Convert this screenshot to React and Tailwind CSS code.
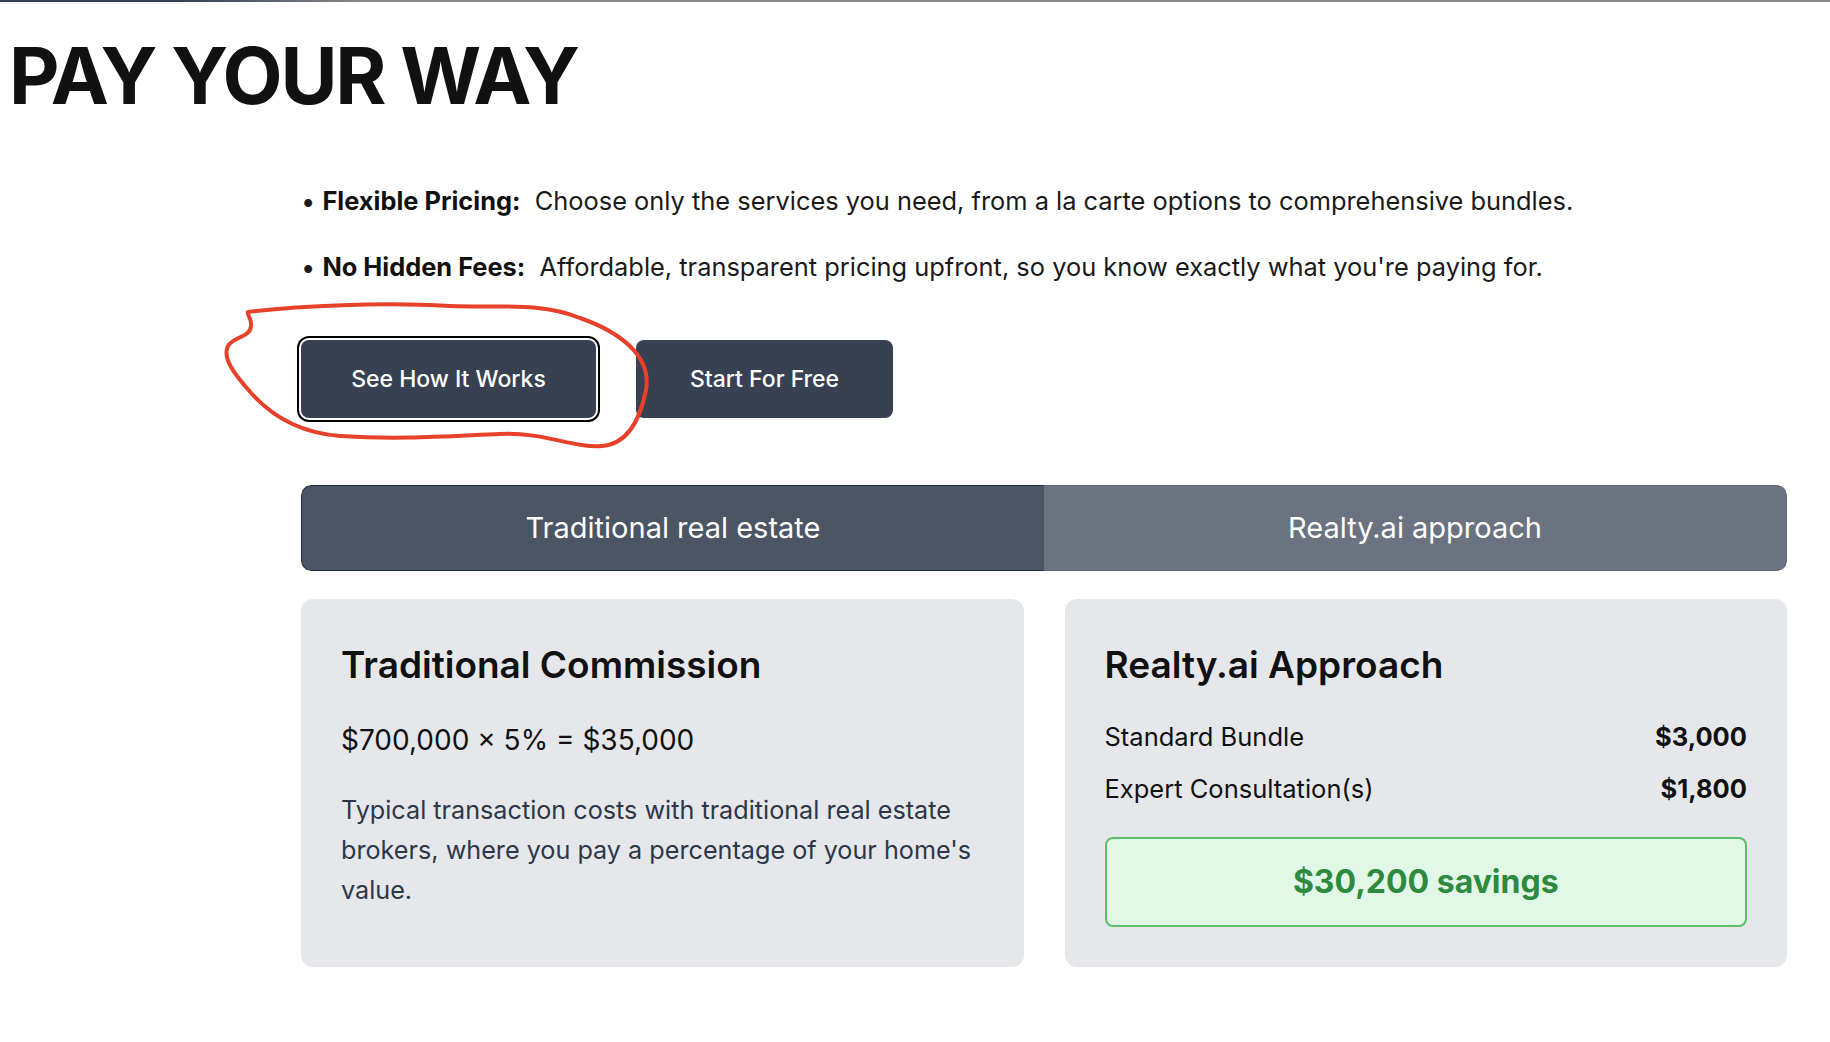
export default function App() {
  return (
    <div className="relative min-h-screen bg-white font-['Inter',sans-serif] text-[#111]">
      {/* top accent line */}
      <div className="h-[2px] w-full bg-gradient-to-r from-[#364155] from-10% to-[#8a8a8a] to-20%" />

      <h1 className="mt-[34px] pl-[9px] text-[78px] font-bold leading-[80px] tracking-[-0.03em] text-[#111]">
        PAY YOUR WAY
      </h1>

      <div className="ml-[301px] mr-[43px]">
        {/* bullets */}
        <div className="mt-[69px] flex flex-col gap-[34px] text-[25.4px] leading-[32px] text-[#1a1a1a]">
          <p>
            • <span className="font-bold text-[#111]">Flexible Pricing:</span>&nbsp; Choose only the services you need, from a la carte options to comprehensive bundles.
          </p>
          <p>
            • <span className="font-bold text-[#111]">No Hidden Fees:</span>&nbsp; Affordable, transparent pricing upfront, so you know exactly what you're paying for.
          </p>
        </div>

        {/* buttons */}
        <div className="mt-[57px] flex gap-[40px]">
          <button className="h-[78px] w-[295px] rounded-[8px] bg-[#374151] text-[23px] font-medium text-white ring-2 ring-black ring-offset-2 ring-offset-white">
            See How It Works
          </button>
          <button className="h-[78px] w-[257px] rounded-[8px] bg-[#374151] text-[23px] font-medium text-white">
            Start For Free
          </button>
        </div>

        {/* tabs */}
        <div className="mt-[67px] flex h-[86px] overflow-hidden rounded-[10px] text-[29px] text-white">
          <div className="flex flex-1 items-center justify-center rounded-l-[10px] border border-r-0 border-[#1f2d44] bg-[#4b5563]">
            Traditional real estate
          </div>
          <div className="flex flex-1 items-center justify-center rounded-r-[10px] border border-l-0 border-[#5f6675] bg-[#6b7280]">
            Realty.ai approach
          </div>
        </div>

        {/* cards */}
        <div className="mt-[28px] grid grid-cols-2 gap-[41px]">
          <div className="rounded-[12px] bg-[#e5e7eb] px-10 pb-10 pt-11">
            <h2 className="text-[37px] font-semibold leading-[44px] text-[#111]">Traditional Commission</h2>
            <p className="mt-[35px] text-[28px] leading-[36px] text-[#111]">$700,000 × 5% = $35,000</p>
            <p className="mt-[32px] text-[25.2px] leading-[40px] text-[#2d3748]">
              Typical transaction costs with traditional real estate brokers, where you pay a percentage of your home's value.
            </p>
          </div>
          <div className="rounded-[12px] bg-[#e5e7eb] px-10 pb-10 pt-11">
            <h2 className="text-[37px] font-semibold leading-[44px] text-[#111]">Realty.ai Approach</h2>
            <div className="mt-[34px] flex flex-col gap-[20px] text-[25.5px] leading-[32px] text-[#111]">
              <div className="flex justify-between">
                <span>Standard Bundle</span>
                <span className="font-bold">$3,000</span>
              </div>
              <div className="flex justify-between">
                <span>Expert Consultation(s)</span>
                <span className="font-bold">$1,800</span>
              </div>
            </div>
            <div className="mt-[32px] flex h-[90px] items-center justify-center rounded-[8px] border-2 border-[#5cc06a] bg-[#e2f8e7] text-[32px] font-bold text-[#2e8a3e]">
              $30,200 savings
            </div>
          </div>
        </div>
      </div>

      {/* hand-drawn annotation */}
      <svg
        className="pointer-events-none absolute left-0 top-0"
        width="1830"
        height="1042"
        viewBox="0 0 1830 1042"
        fill="none"
      >
        <path
          d="M248 312 C300 306, 380 302, 450 306 C500 308, 540 302, 580 318 C620 332, 652 356, 646 390 C640 420, 628 444, 602 446 C572 448, 545 432, 500 434 C450 436, 400 440, 340 436 C300 433, 272 416, 252 394 C234 374, 222 358, 228 346 C234 336, 250 338, 251 326 C252 318, 246 314, 248 312"
          stroke="#e8412a"
          strokeWidth="4"
          strokeLinecap="round"
          strokeLinejoin="round"
        />
      </svg>
    </div>
  );
}
